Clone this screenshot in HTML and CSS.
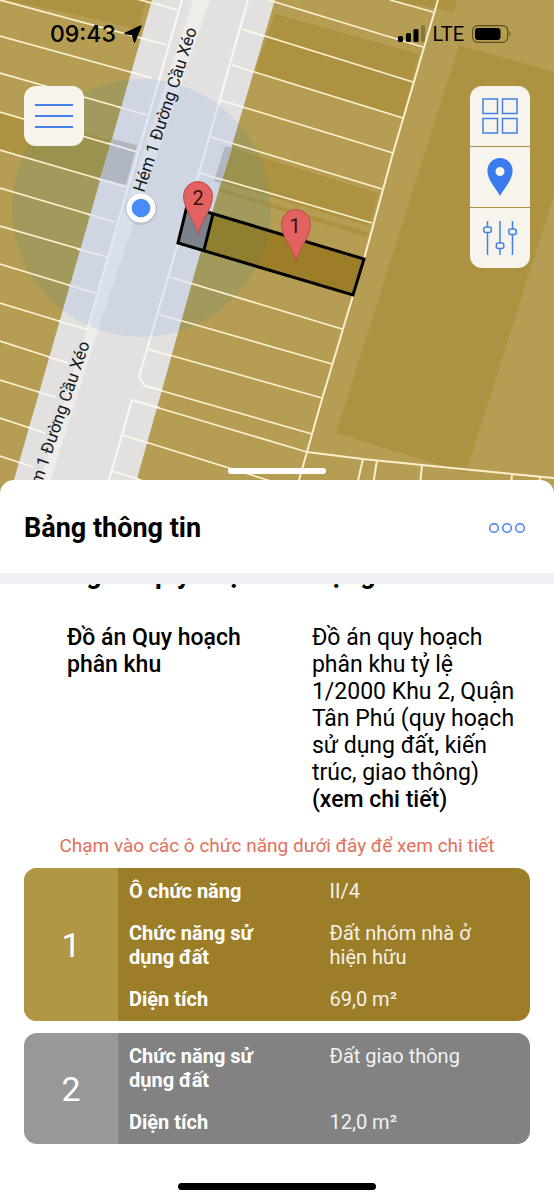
FILE: index.html
```html
<!DOCTYPE html>
<html lang="vi">
<head>
<meta charset="utf-8">
<meta name="viewport" content="width=device-width, initial-scale=1">
<title>Bảng thông tin</title>
<link rel="stylesheet" href="styles.css">
</head>
<body>
<main class="app">
  <section class="map" aria-label="Bản đồ quy hoạch">
    <svg class="map-canvas" viewBox="0 0 554 504">
      <defs>
        <clipPath id="road"><polygon points="152,0 275,0 204,240 130,504 7,504 83,240"/></clipPath>
      </defs>
      <rect width="554" height="504" fill="#b59d53"/>
      <!-- buildings -->
      <g fill="#9c7d18" fill-opacity=".3">
        <polygon points="459,45 554,72 554,195 466,473 336,433"/>
        <polygon points="390,0 457,0 454,12 433,8"/>
        <polygon points="275,14 419,54 403,117 255,72"/>
        <polygon points="228,147 378,193 366,237 214,190"/>
        <polygon points="6,0 146,0 138,30 100,20"/>
        <polygon points="0,112 112,140 102,178 0,150"/>
      </g>
      <path d="M217 184L368 229" stroke="#b59d53" stroke-width="6"/>
      <circle cx="141" cy="208" r="129" fill="#6d9079" fill-opacity=".26"/>
      <polygon points="152,0 275,0 204,240 130,504 7,504 83,240" fill="#e2e1df"/>
      <polygon points="193,0 210,0 128,240 98,330 43,504 33,504 114,240" fill="#eeedea"/>
      <polygon points="112,139 137,145 126,185 100,178" fill="#bebdb9"/>
      <polygon points="225,146 232,148 221,184 214,181" fill="#bebdb9"/>
      <!-- parcel boundaries -->
      <g fill="none" stroke="#fbefcd" stroke-width="1.7">
        <path d="M100-11L177 10M0 0L167 45M0 36L152 78M0 73L147 115M0 112L137 152M0 150L127 187M0 188L115 222M0 226L107 257M0 264L95 293M0 303L85 329M0 341L68 363M0 380L55 397M0 418L45 433M0 456L33 467"/>
        <path d="M252-5L423 47M390 0L433 12M242 29L413 82M232 65L403 118M220 100L393 153M211 137L382 189M200 173L372 223M170 277L342 329M158 314L332 364M148 349L322 398M145 386L312 434M132 400L307 452M123 435L277 483M112 471L150 483"/>
        <path d="M438 0L393 153L364 259L322 399L299 480L292 504M307 452L363 459L422 465L512 474L554 478M363 459L357 485M377 460L373 485M422 465L420 485M512 474L511 485M540 477L539 485" stroke-width="2"/>
      </g>
      <g fill="none" stroke="#f8f7f4" stroke-width="2.2">
        <path d="M182 0L113 240L87 330"/>
        <path d="M248 0L199 173L178 243L139 377L145 386L162 390M160 408L132 400L102 504"/>
        <path d="M154 3L177 10M140 38L167 45M130 72L152 78M118 107L147 115M108 143L137 152M98 179L127 187M87 214L115 222M77 249L107 257M68 285L95 293M58 321L85 329M48 357L68 363M38 392L55 397M28 427L45 433M18 462L33 467" stroke-width="1.7"/>
        <path d="M242 29L263 36M232 65L253 72M220 100L243 107M211 137L232 143M200 173L222 180M170 277L192 284M158 314L181 321M148 349L171 356M123 435L148 443M112 471L139 479" stroke-width="1.7"/>
      </g>
      <circle cx="141" cy="208" r="129" fill="#6397f3" fill-opacity=".15" clip-path="url(#road)"/>
      <!-- selected parcel -->
      <polygon points="187,206 213,214 204,250 178,243" fill="#7b828b"/>
      <polygon points="213,214 364,259 353,295 204,250" fill="#9d7e28"/>
      <path d="M213 214L270 231A129 129 0 0 1 257 266L204 250Z" fill="#8f7f30"/>
      <path d="M187 206L364 259L353 295L178 243ZM213 214L204 250" fill="none" stroke="#000" stroke-width="3"/>
      <g class="street">
        <text transform="translate(144 193) rotate(-72)">Hém 1 Đường Cầu Xéo</text>
        <text transform="translate(34 506) rotate(-71)">Hém 1 Đường Cầu Xéo</text>
      </g>
      <circle cx="141" cy="209" r="16" fill="#4a5a78" fill-opacity=".15"/>
      <circle cx="141" cy="208" r="14.5" fill="#fff"/>
      <circle cx="141" cy="208" r="9.3" fill="#488cf6"/>
      <g fill="#e1625f" stroke="#b84f4d" stroke-width="1">
        <path d="M198 235C196 222 183.500 210 183.500 196A14.500 14.500 0 0 1 212.500 196C212.500 210 200 222 198 235Z"/>
        <path d="M296 262C294 249 281.500 238 281.500 224A14.500 14.500 0 0 1 310.500 224C310.500 238 298 249 296 262Z"/>
      </g>
      <g class="pin-number">
        <text x="198" y="205">2</text>
        <text x="295" y="233">1</text>
      </g>
    </svg>

    <div class="overlay">
      <div class="status">
        <div class="status-side">
          <span class="clock">09:43</span>
          <svg width="18" height="18" viewBox="0 0 18 18"><path d="M17 1L1 8.500L8.500 9.500L10.500 17Z" stroke="#000" stroke-width="1.500" stroke-linejoin="round"/></svg>
        </div>
        <div class="status-side">
          <svg width="27" height="18" viewBox="0 0 27 18"><rect y="11" width="5" height="6" rx="1.500"/><rect x="8" y="8" width="5" height="9" rx="1.500"/><rect x="15.500" y="4" width="5" height="13" rx="1.500"/><rect x="23" width="4" height="17" rx="1.500" opacity=".25"/></svg>
          <span class="network">LTE</span>
          <svg width="40" height="18" viewBox="0 0 40 18"><rect x=".7" y=".7" width="35" height="16.600" rx="5" fill="none" stroke="#5c4d20" stroke-width="1.200"/><rect x="3" y="3" width="25.500" height="12" rx="3"/><path d="M37.500 6Q39.500 9 37.500 12Z" fill="#5c4d20"/></svg>
        </div>
      </div>
      <div class="tools">
        <button class="tool menu" type="button" aria-label="Menu">
          <svg width="38" height="26" viewBox="0 0 38 26"><path d="M0 2H38M0 13H38M0 24H38" stroke-width="1.800"/></svg>
        </button>
        <div class="toolbar">
          <button class="tool" type="button" aria-label="Lớp bản đồ">
            <svg width="36" height="36" viewBox="0 0 36 36"><path d="M1 1H15.500V15.500H1ZM20.500 1H35V15.500H20.500ZM1 20.500H15.500V35H1ZM20.500 20.500H35V35H20.500Z" stroke-width="1.500"/></svg>
          </button>
          <button class="tool" type="button" aria-label="Vị trí">
            <svg width="26" height="38" viewBox="0 0 26 38"><path d="M13 0A12.600 12.600 0 0 0 .4 12.600C.4 22 8 29 13 38C18 29 25.600 22 25.600 12.600A12.600 12.600 0 0 0 13 0ZM13 9A4.500 4.500 0 1 1 13 18A4.500 4.500 0 1 1 13 9Z" fill="#3a7bf0" stroke="none"/></svg>
          </button>
          <button class="tool" type="button" aria-label="Tùy chỉnh">
            <svg width="34" height="34" viewBox="0 0 34 34"><path d="M4.500 0V6M4.500 11.500V34M17 0V22M17 27.500V34M29.500 0V8M29.500 13.500V34" stroke-width="1.500"/><g stroke-width="1.500"><rect x=".8" y="6" width="7.500" height="5.500" rx="2"/><rect x="13.300" y="22" width="7.500" height="5.500" rx="2"/><rect x="25.700" y="8" width="7.500" height="5.500" rx="2"/></g></svg>
          </button>
        </div>
      </div>
      <div class="handle"></div>
    </div>
  </section>

  <section class="sheet">
    <header class="sheet-header">
      <h1 class="title">Bảng thông tin</h1>
      <button class="more" type="button" aria-label="Thêm">
        <svg width="38" height="12" viewBox="0 0 38 12"><circle cx="6" cy="6" r="4.300"/><circle cx="19" cy="6" r="4.300"/><circle cx="32" cy="6" r="4.300"/></svg>
      </button>
    </header>
    <div class="content">
      <h2 class="section-title">Thông tin quy hoạch sử dụng đất</h2>
      <dl class="project">
        <dt>Đồ án Quy hoạch phân khu</dt>
        <dd>Đồ án quy hoạch phân khu tỷ lệ 1/2000 Khu 2, Quận Tân Phú (quy hoạch sử dụng đất, kiến trúc, giao thông) <a class="detail" href="#chi-tiet">(xem chi tiết)</a></dd>
      </dl>
      <p class="hint">Chạm vào các ô chức năng dưới đây để xem chi tiết</p>
      <div class="zones">
        <button class="zone residential" type="button">
          <span class="zone-number">1</span>
          <span class="zone-info">
            <span class="label">Ô chức năng</span><span class="value">II/4</span>
            <span class="label">Chức năng sử dụng đất</span><span class="value">Đất nhóm nhà ở hiện hữu</span>
            <span class="label">Diện tích</span><span class="value">69,0 m²</span>
          </span>
        </button>
        <button class="zone traffic" type="button">
          <span class="zone-number">2</span>
          <span class="zone-info">
            <span class="label">Chức năng sử dụng đất</span><span class="value">Đất giao thông</span>
            <span class="label">Diện tích</span><span class="value">12,0 m²</span>
          </span>
        </button>
      </div>
    </div>
    <div class="home-indicator"></div>
  </section>
</main>
</body>
</html>
```
FILE: styles.css
```css
* { box-sizing: border-box; }
body {
  margin: 0;
  background: #fff;
  color: #000;
  font-family: Roboto, "Noto Sans", sans-serif;
}
h1, h2, p, dl, dd { margin: 0; }
button {
  margin: 0;
  padding: 0;
  border: 0;
  background: none;
  color: inherit;
  font: inherit;
  text-align: left;
}
svg { display: block; flex: none; }

.map { position: relative; overflow: hidden; }
.map-canvas { width: 100%; height: auto; }
.street { font-size: 17px; fill: #15181f; }
.pin-number { font-size: 20px; fill: #35100f; text-anchor: middle; }
.overlay {
  position: absolute;
  inset: 0 0 24px;
  display: flex;
  flex-direction: column;
  padding: 20px 24px 6px;
}
.status {
  display: flex;
  justify-content: space-between;
  align-items: center;
  padding: 0 18px 0 26px;
  height: 28px;
}
.status-side { display: flex; align-items: center; gap: 8px; }
.clock { font: 500 23px/28px Inter, sans-serif; }
.network { font-size: 20px; line-height: 28px; }
.tools {
  display: flex;
  flex: 1;
  justify-content: space-between;
  align-items: flex-start;
  padding-top: 38px;
}
.tool {
  display: flex;
  align-items: center;
  justify-content: center;
  width: 60px;
  height: 60px;
  background: #f6f4ec;
}
.tool svg, .more svg { fill: none; stroke: #4380ea; }
.more svg { stroke-width: 1.5; }
.menu { border-radius: 12px; }
.toolbar {
  display: flex;
  flex-direction: column;
  gap: 1px;
  border-radius: 12px;
  overflow: hidden;
}
.handle {
  align-self: center;
  width: 98px;
  height: 6px;
  border-radius: 3px;
  background: #fff;
}

.sheet {
  position: relative;
  margin-top: -24px;
  padding-bottom: 10px;
  border-radius: 14px 14px 0 0;
  background: #fff;
}
.sheet-header {
  display: flex;
  align-items: center;
  justify-content: space-between;
  padding: 32px 28px 29px 24px;
}
.title { font-size: 27px; line-height: 32px; font-weight: 700; }
.content { border-top: 11px solid #f1f0f5; overflow: hidden; }
.section-title {
  margin: -25px 24px 35px;
  font-size: 27px;
  line-height: 30px;
  font-weight: 700;
}
.project {
  display: grid;
  grid-template-columns: 6fr 5fr;
  margin: 0 38px 0 67px;
  font-size: 23px;
  line-height: 27px;
}
.project dt { padding-right: 40px; font-weight: 500; }
.detail { color: inherit; font-weight: 500; text-decoration: none; }
.hint {
  margin: 20px 24px 10px;
  color: #e2705a;
  font-size: 19px;
  line-height: 25px;
  text-align: center;
}
.zones { display: flex; flex-direction: column; gap: 12px; margin: 0 24px; }
.zone {
  display: flex;
  width: 100%;
  border-radius: 13px;
  overflow: hidden;
  color: #fff;
  font-size: 20px;
  line-height: 24px;
}
.residential { background: #9d7e28; }
.traffic { background: #828282; }
.zone-number {
  display: flex;
  align-items: center;
  justify-content: center;
  align-self: stretch;
  width: 94px;
  background: rgb(255 255 255 / 18%);
  font-size: 34px;
}
.residential .zone-number { background: #b09645; }
.zone-info {
  display: grid;
  flex: 1;
  grid-template-columns: 1fr 1fr;
  row-gap: 18px;
  padding: 11px 0 10px 11px;
}
.label { padding-right: 40px; font-weight: 700; }
.value { padding-right: 40px; opacity: .9; }
.home-indicator {
  width: 198px;
  height: 7px;
  margin: 39px auto 0;
  border-radius: 4px;
  background: #000;
}
```
